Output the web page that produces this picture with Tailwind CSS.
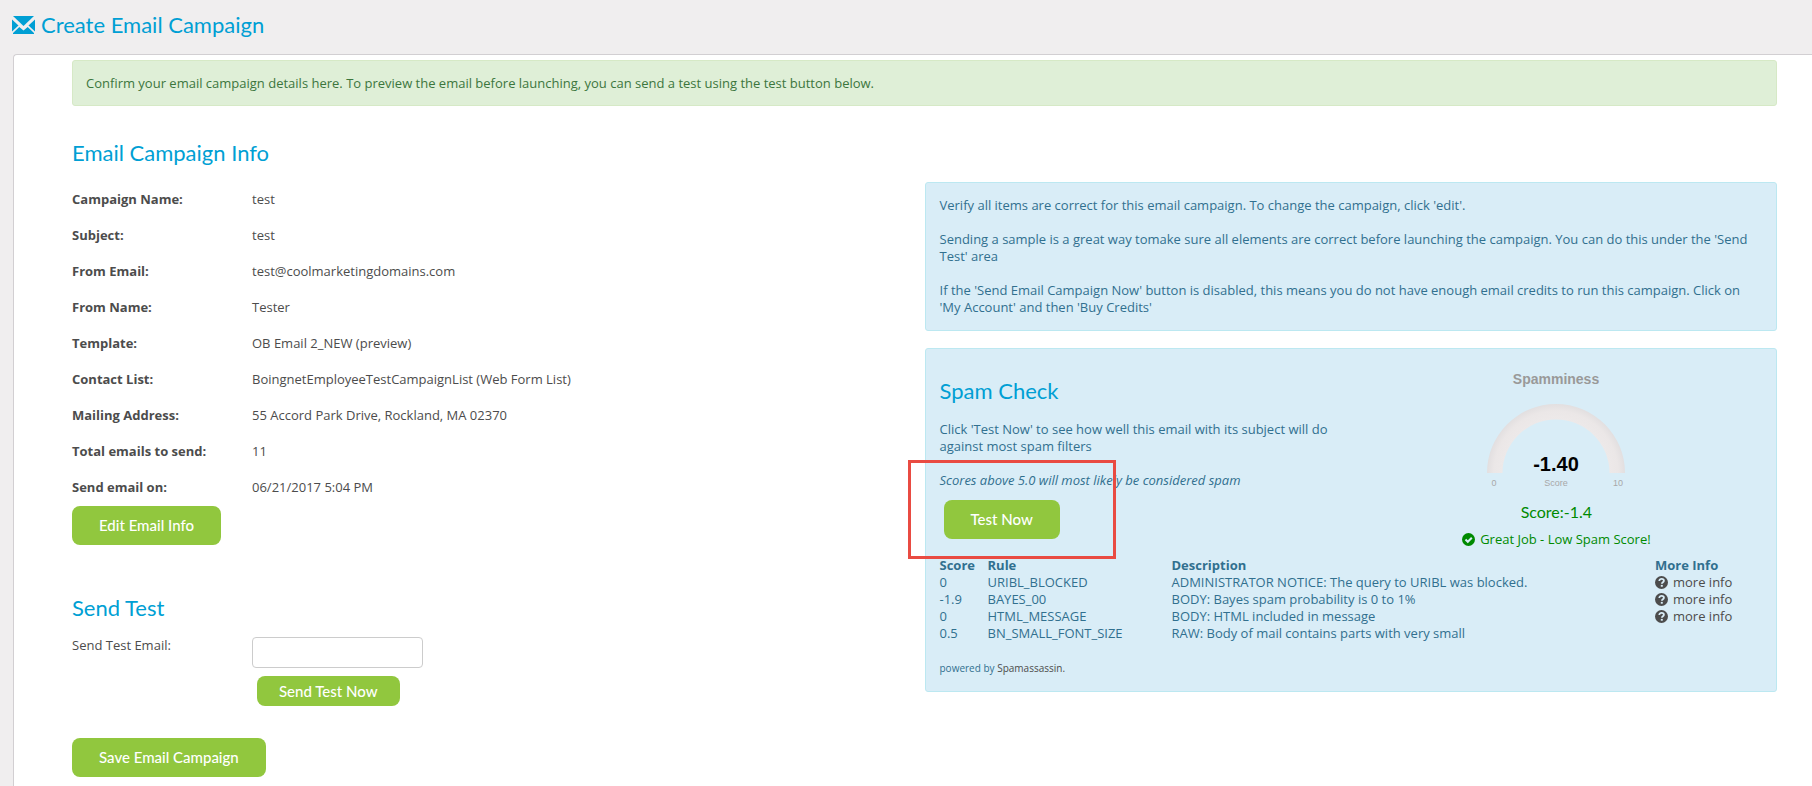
<!DOCTYPE html>
<html lang="en">
<head>
    <meta charset="UTF-8">
    <meta name="viewport" content="width=device-width, initial-scale=1.0">
    <title>Create Email Campaign</title>
    <script src="https://cdn.jsdelivr.net/npm/@tailwindcss/browser@4"></script>
</head>
<body class="bg-[#f0eeef] min-h-screen flex flex-col overflow-x-hidden font-['Open_Sans',sans-serif] text-[13px] leading-[17px] text-[#4c4c4c]">

    <!-- Page title -->
    <header class="flex items-center gap-1.5 pl-3 h-[54px] pb-1 text-[#009fd4]">
        <svg class="w-[23px] h-[18px]" viewBox="0 0 23 18" fill="currentColor" aria-hidden="true">
            <path d="M1 0h21l-10.500 10z"/>
            <path d="M0 3.500l6.500 6-6.500 6z"/>
            <path d="M23 3.500l-6.500 6 6.500 6z"/>
            <path d="M7.300 11l4.200 3.400 4.200-3.400 6.300 6v1H1v-1z"/>
        </svg>
        <h1 class="font-[Lato,sans-serif] text-[22px] leading-[26px]">Create Email Campaign</h1>
    </header>

    <main class="grow ml-[13px] bg-white border-t border-l border-[#d2cfd2] rounded-tl pt-[5px] pl-[58px] pr-[35px]">

        <div role="alert" class="border border-[#d6e9c6] bg-[#dfefd7] text-[#3c763d] rounded-[3px] px-[13px] pt-3.5 pb-[13px]">
            Confirm your email campaign details here. To preview the email before launching, you can send a test using the test button below.
        </div>

        <div class="grid grid-cols-2">

            <!-- Campaign details -->
            <section class="pt-[34px]">
                <h2 class="font-[Lato,sans-serif] text-[22px] leading-[26px] text-[#009fd4]">Email Campaign Info</h2>
                <dl class="grid grid-cols-[180px_1fr] gap-y-[19px] mt-[25px]">
                    <dt class="font-bold">Campaign Name:</dt>
                    <dd>test</dd>
                    <dt class="font-bold">Subject:</dt>
                    <dd>test</dd>
                    <dt class="font-bold">From Email:</dt>
                    <dd>test@coolmarketingdomains.com</dd>
                    <dt class="font-bold">From Name:</dt>
                    <dd>Tester</dd>
                    <dt class="font-bold">Template:</dt>
                    <dd>OB Email 2_NEW (<a href="#">preview</a>)</dd>
                    <dt class="font-bold">Contact List:</dt>
                    <dd>BoingnetEmployeeTestCampaignList (Web Form List)</dd>
                    <dt class="font-bold">Mailing Address:</dt>
                    <dd>55 Accord Park Drive, Rockland, MA 02370</dd>
                    <dt class="font-bold">Total emails to send:</dt>
                    <dd>11</dd>
                    <dt class="font-bold">Send email on:</dt>
                    <dd>06/21/2017 5:04 PM</dd>
                </dl>
                <button type="button" class="block mt-2.5 h-[39px] px-[27px] rounded-lg bg-[#91c73e] text-white font-[Lato,sans-serif] font-medium text-[15px]">Edit Email Info</button>

                <h2 class="mt-[50px] font-[Lato,sans-serif] text-[22px] leading-[26px] text-[#009fd4]">Send Test</h2>
                <form class="mt-4">
                    <div class="grid grid-cols-[180px_1fr]">
                        <label for="test-email">Send Test Email:</label>
                        <div>
                            <input type="email" id="test-email" name="test-email" class="block w-[171px] h-[31px] px-2 bg-white border border-[#ccc] rounded">
                            <button type="button" class="block mt-2 ml-[5px] h-[30px] px-[22px] rounded-lg bg-[#91c73e] text-white font-[Lato,sans-serif] font-medium text-[15px]">Send Test Now</button>
                        </div>
                    </div>
                    <button type="submit" class="block mt-8 h-[39px] px-[27px] rounded-lg bg-[#91c73e] text-white font-[Lato,sans-serif] font-medium text-[15px]">Save Email Campaign</button>
                </form>
            </section>

            <div class="pt-[76px] text-[#31708f]">

                <!-- Help -->
                <div class="border border-[#bce8f1] bg-[#d9edf7] rounded-[3px] p-3.5 flex flex-col gap-[17px]">
                    <p>Verify all items are correct for this email campaign. To change the campaign, click 'edit'.</p>
                    <p>Sending a sample is a great way tomake sure all elements are correct before launching the campaign. You can do this under the 'Send Test' area</p>
                    <p>If the 'Send Email Campaign Now' button is disabled, this means you do not have enough email credits to run this campaign. Click on 'My Account' and then 'Buy Credits'</p>
                </div>

                <!-- Spam check -->
                <div class="mt-[17px] border border-[#bce8f1] bg-[#d9edf7] rounded-[3px] p-3.5">
                    <div class="grid grid-cols-2">
                        <div class="pt-[15px]">
                            <h2 class="font-[Lato,sans-serif] text-[22px] leading-[26px] text-[#009fd4]">Spam Check</h2>
                            <p class="mt-[17px]">Click 'Test Now' to see how well this email with its subject will do against most spam filters</p>
                            <p class="mt-[17px] italic">Scores above 5.0 will most likely be considered spam</p>
                            <div class="relative mt-[11px] ml-1 w-fit">
                                <button type="button" class="block h-[39px] px-[27px] rounded-lg bg-[#91c73e] text-white font-[Lato,sans-serif] font-medium text-[15px]">Test Now</button>
                                <!-- highlight round the button -->
                                <div class="absolute -left-9 -top-10 w-[208px] h-[99px] border-3 border-[#e94b42] pointer-events-none"></div>
                            </div>
                        </div>

                        <div class="flex flex-col items-center text-[#008a00]">
                            <svg class="w-[200px] h-[139px] font-['Liberation_Sans',sans-serif]" viewBox="0 0 200 139" text-anchor="middle" role="img" aria-label="Spamminess score">
                                <defs>
                                    <radialGradient id="arc" gradientUnits="userSpaceOnUse" cx="100" cy="110" r="69">
                                        <stop offset="0.77" stop-color="#ede9e9"/>
                                        <stop offset="0.9" stop-color="#ebe7e7"/>
                                        <stop offset="1" stop-color="#e2dfe0"/>
                                    </radialGradient>
                                </defs>
                                <text x="100" y="21" font-size="14" font-weight="bold" fill="#999999">Spamminess</text>
                                <path d="M31 110a69 69 0 0 1 138 0h-15.500a53.500 53.500 0 0 0-107 0z" fill="url(#arc)"/>
                                <text x="100" y="108" font-size="20" font-weight="bold" fill="#010101">-1.40</text>
                                <text x="38" y="123" font-size="9" fill="#a8a8a8">0</text>
                                <text x="100" y="123" font-size="9" fill="#a8a8a8">Score</text>
                                <text x="162" y="123" font-size="9" fill="#a8a8a8">10</text>
                            </svg>
                            <p class="font-[Lato,sans-serif] text-base leading-5">Score:-1.4</p>
                            <p class="flex items-center gap-[5px] mt-[9px]">
                                <svg class="w-[13px] h-[13px]" viewBox="0 0 13 13" aria-hidden="true">
                                    <circle cx="6.500" cy="6.500" r="6.500" fill="#008a00"/>
                                    <path d="M3.500 6.500l2.300 2.300 4-4" fill="none" stroke="#d9edf7" stroke-width="2"/>
                                </svg>
                                Great Job - Low Spam Score!
                            </p>
                        </div>
                    </div>

                    <table class="w-full mt-[9px] table-fixed text-left">
                        <thead>
                            <tr>
                                <th class="w-12 font-bold">Score</th>
                                <th class="w-[184px] font-bold">Rule</th>
                                <th class="font-bold">Description</th>
                                <th class="w-[107px] font-bold">More Info</th>
                            </tr>
                        </thead>
                        <tbody>
                            <tr>
                                <td>0</td>
                                <td>URIBL_BLOCKED</td>
                                <td>ADMINISTRATOR NOTICE: The query to URIBL was blocked.</td>
                                <td>
                                    <a href="#" class="flex items-center gap-[5px] text-[#4c4c4c]">
                                        <svg class="w-[13px] h-[13px]" viewBox="0 0 13 13" aria-hidden="true">
                                            <circle cx="6.500" cy="6.500" r="6.500" fill="#4c4c4c"/>
                                            <path d="M4.300 5c0-3 4.600-2.700 4.600-.200 0 1.500-2 1.400-2 3" fill="none" stroke="#d9edf7" stroke-width="1.800"/>
                                            <path d="M5.800 8.900h2v1.800h-2z" fill="#d9edf7"/>
                                        </svg>
                                        more info
                                    </a>
                                </td>
                            </tr>
                            <tr>
                                <td>-1.9</td>
                                <td>BAYES_00</td>
                                <td>BODY: Bayes spam probability is 0 to 1%</td>
                                <td>
                                    <a href="#" class="flex items-center gap-[5px] text-[#4c4c4c]">
                                        <svg class="w-[13px] h-[13px]" viewBox="0 0 13 13" aria-hidden="true">
                                            <circle cx="6.500" cy="6.500" r="6.500" fill="#4c4c4c"/>
                                            <path d="M4.300 5c0-3 4.600-2.700 4.600-.200 0 1.500-2 1.400-2 3" fill="none" stroke="#d9edf7" stroke-width="1.800"/>
                                            <path d="M5.800 8.900h2v1.800h-2z" fill="#d9edf7"/>
                                        </svg>
                                        more info
                                    </a>
                                </td>
                            </tr>
                            <tr>
                                <td>0</td>
                                <td>HTML_MESSAGE</td>
                                <td>BODY: HTML included in message</td>
                                <td>
                                    <a href="#" class="flex items-center gap-[5px] text-[#4c4c4c]">
                                        <svg class="w-[13px] h-[13px]" viewBox="0 0 13 13" aria-hidden="true">
                                            <circle cx="6.500" cy="6.500" r="6.500" fill="#4c4c4c"/>
                                            <path d="M4.300 5c0-3 4.600-2.700 4.600-.200 0 1.500-2 1.400-2 3" fill="none" stroke="#d9edf7" stroke-width="1.800"/>
                                            <path d="M5.800 8.900h2v1.800h-2z" fill="#d9edf7"/>
                                        </svg>
                                        more info
                                    </a>
                                </td>
                            </tr>
                            <tr>
                                <td>0.5</td>
                                <td>BN_SMALL_FONT_SIZE</td>
                                <td>RAW: Body of mail contains parts with very small</td>
                                <td></td>
                            </tr>
                        </tbody>
                    </table>

                    <p class="mt-[18px] text-[10px]">powered by <a href="#" class="text-[#4c4c4c]">Spamassassin.</a></p>
                </div>
            </div>
        </div>
    </main>

</body>
</html>
